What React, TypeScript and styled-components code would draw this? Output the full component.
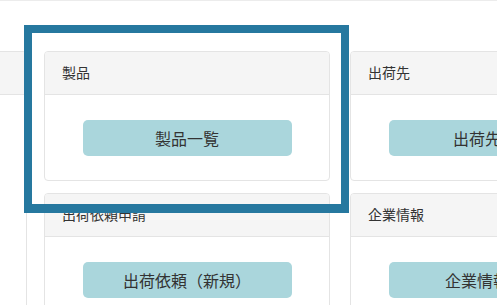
import React from "react";
import styled, { createGlobalStyle } from "styled-components";

const GlobalStyle = createGlobalStyle`
  html, body {
    margin: 0;
    padding: 0;
    background: #ffffff;
    overflow: hidden;
  }
  body {
    font-family: "Noto Sans CJK JP", "Noto Sans", sans-serif;
    color: #333333;
  }
`;

const Page = styled.div`
  position: relative;
  width: 497px;
  height: 305px;
  overflow: hidden;
  border-top: 1px solid #ececec;
  box-sizing: border-box;
  padding-top: 50px;
`;

const MenuGrid = styled.div`
  display: grid;
  grid-template-columns: 286px 286px 286px;
  column-gap: 20px;
  row-gap: 12px;
  margin-left: -262px;
`;

// $span: the left column is one tall card running behind both rows
const Card = styled.div<{ $span?: number }>`
  background: #ffffff;
  border: 1px solid #e4e4e4;
  border-radius: 4px;
  overflow: hidden;
  grid-row: ${(p) => (p.$span ? `span ${p.$span}` : "auto")};
  margin-right: ${(p) => (p.$span ? "-3px" : "0")};
`;

const CardHeader = styled.div`
  background: #f5f5f5;
  border-bottom: 1px solid #e4e4e4;
  padding: 10px 17px 12px;
  font-size: 14px;
  line-height: 20px;
  color: #333333;
  white-space: nowrap;
`;

const CardBody = styled.div`
  padding: 25px 0 24px;
  display: flex;
  justify-content: center;
`;

const MenuButton = styled.button`
  width: 209px;
  height: 36px;
  border: none;
  border-radius: 5px;
  background: #aad6dc;
  color: #333333;
  font-family: "Noto Sans CJK JP", "Noto Sans", sans-serif;
  font-size: 16px;
  line-height: 36px;
  padding: 0;
  white-space: nowrap;
  cursor: pointer;
`;

// tutorial-style highlight frame drawn over the first menu card
const Highlight = styled.div`
  position: absolute;
  left: 24px;
  top: 24px;
  width: 325px;
  height: 188px;
  box-sizing: border-box;
  border: 8px solid #26789f;
  border-bottom-width: 9px;
  pointer-events: none;
`;

const menus = [
  { title: "製品", button: "製品一覧" },
  { title: "出荷先", button: "出荷先一覧" },
  { title: "出荷依頼申請", button: "出荷依頼（新規）" },
  { title: "企業情報", button: "企業情報編集" },
];

const App: React.FC = () => {
  return (
    <>
      <GlobalStyle />
      <Page>
        <MenuGrid>
          <Card $span={2}>
            <CardHeader>&nbsp;</CardHeader>
          </Card>
          {menus.map((m) => (
            <Card key={m.title}>
              <CardHeader>{m.title}</CardHeader>
              <CardBody>
                <MenuButton>{m.button}</MenuButton>
              </CardBody>
            </Card>
          ))}
        </MenuGrid>
        <Highlight />
      </Page>
    </>
  );
};

export default App;
